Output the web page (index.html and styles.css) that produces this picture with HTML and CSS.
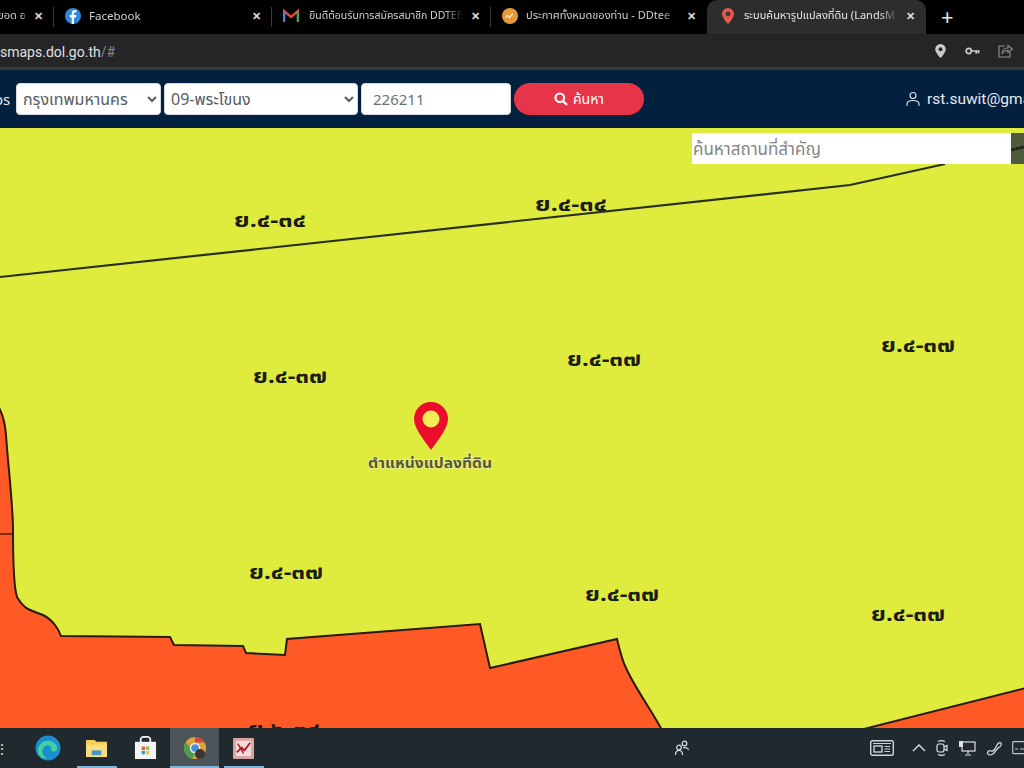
FILE: index.html
```html
<!DOCTYPE html>
<html lang="th">
<head>
  <meta charset="UTF-8" />
  <title>ระบบค้นหารูปแปลงที่ดิน (LandsMaps)</title>
  <link rel="stylesheet" href="styles.css">
</head>
<body>
  <!-- Browser tabs -->
  <div class="tab-bar">
    <div class="tab tab-first">
      <span class="tab-title">ยอด อ</span>
      <span class="tab-close">&#10005;</span>
    </div>
    <div class="tab tab-fb">
      <svg class="tab-icon" viewBox="0 0 16 16"><circle cx="8" cy="8" r="8" fill="#2d88d8"/><path d="M9 16V9.4h2l.4-2.4H9V5.6c0-.8.3-1.2 1.2-1.2h1.2V2.2C11 2.1 10.400 2 9.700 2 7.900 2 6.700 3.100 6.700 5.200V7H4.800v2.400h1.900V16z" fill="#fff"/></svg>
      <span class="tab-title">Facebook</span>
      <span class="tab-close">&#10005;</span>
    </div>
    <div class="tab tab-mail">
      <svg class="tab-icon" viewBox="0 0 16 14"><path d="M1 13V2l7 6 7-6v11" fill="none" stroke="#e0483c" stroke-width="2.400"/><path d="M1 13V3" stroke="#4a86d8" stroke-width="2.400"/><path d="M15 13V3" stroke="#3da35a" stroke-width="2.400"/></svg>
      <span class="tab-title">ยินดีต้อนรับการสมัครสมาชิก DDTEED</span>
      <span class="tab-close">&#10005;</span>
    </div>
    <div class="tab tab-dd">
      <svg class="tab-icon" viewBox="0 0 16 16"><circle cx="8" cy="8" r="8" fill="#e49a3a"/><path d="M4 10c1-3 2-3 3-1s2-3 4-3" fill="none" stroke="#fbe3b8" stroke-width="1.500"/></svg>
      <span class="tab-title">ประกาศทั้งหมดของท่าน - DDtee</span>
      <span class="tab-close">&#10005;</span>
    </div>
    <div class="tab tab-active">
      <svg class="tab-icon tab-pin" viewBox="0 0 12 16"><path d="M6 0a6 6 0 0 0-6 6c0 4 6 10 6 10s6-6 6-10a6 6 0 0 0-6-6z" fill="#e8574c"/><circle cx="6" cy="6" r="2.400" fill="#3a3a3b"/></svg>
      <span class="tab-title">ระบบค้นหารูปแปลงที่ดิน (LandsM</span>
      <span class="tab-close">&#10005;</span>
    </div>
    <span class="tab-new">+</span>
  </div>

  <!-- Address bar -->
  <div class="tool-bar">
    <div class="url">smaps.dol.go.th<span class="url-rest">/#</span></div>
    <div class="tool-icons">
      <svg class="tool-pin" viewBox="0 0 12 16" width="11" height="14"><path d="M6 0a6 6 0 0 0-6 6c0 4 6 10 6 10s6-6 6-10a6 6 0 0 0-6-6z" fill="#c9cacb"/><circle cx="6" cy="6" r="2.200" fill="#232325"/></svg>
      <svg viewBox="0 0 16 8" width="15" height="8"><circle cx="4" cy="4" r="2.800" fill="none" stroke="#c9cacb" stroke-width="1.800"/><path d="M7 4h8.500M12 4v3M14.500 4v2.500" stroke="#c9cacb" stroke-width="1.800"/></svg>
      <svg viewBox="0 0 16 16" width="16" height="16"><path d="M8 3H2v11h11V9" fill="none" stroke="#8f9091" stroke-width="1.100"/><path d="M5 11c0-4 3-6 6-6V2.500L15.500 6 11 9.500V7.500c-3 0-5 1-6 3.500z" fill="none" stroke="#8f9091" stroke-width="1.100"/></svg>
    </div>
  </div>

  <!-- Site header -->
  <header class="site-header">
    <span class="brand-tail">os</span>
    <select class="field field-province"><option>กรุงเทพมหานคร</option></select>
    <select class="field field-district"><option>09-พระโขนง</option></select>
    <input class="field field-parcel" type="text" value="226211">
    <button class="search-btn">
      <svg viewBox="0 0 14 14" width="14" height="14"><circle cx="5.800" cy="5.800" r="4.300" fill="none" stroke="#fff" stroke-width="2.200"/><path d="M9 9l4 4" stroke="#fff" stroke-width="2.400"/></svg>
      ค้นหา
    </button>
    <div class="user">
      <svg viewBox="0 0 16 16" width="16" height="16"><circle cx="8" cy="4.500" r="3" fill="none" stroke="#dfe5ea" stroke-width="1.100"/><path d="M2 15v-2c0-2 2-3.500 6-3.500s6 1.500 6 3.500v2" fill="none" stroke="#dfe5ea" stroke-width="1.100"/></svg>
      <span class="user-name">rst.suwit@gma</span>
    </div>
  </header>

  <!-- Map -->
  <main class="map">
    <svg class="map-canvas" viewBox="0 128 1024 600" width="1024" height="600">
      <rect x="0" y="128" width="1024" height="600" fill="#dfec3e"/>
      <path class="zone" d="M-2 406C3 414 5 422 6 435C8 465 13 505 13 530C13 555 13 585 17 597C20 602 24 607 28 609C34 612 38 613 43 615C49 618 52 621 55 625C58 629 60 633 61 636L170 637L174 645L243 646L246 653L285 655L287 639L480 624L490 668L617 639C620 652 622 660 626 668C635 688 650 708 662 730H-2Z"/>
      <path class="zone" d="M860 730L1026 688V730Z"/>
      <path class="line" d="M0 277L850 185L945 164"/>
      <path class="line thin" d="M0 534H12"/>
      <text class="plot" textLength="72" lengthAdjust="spacingAndGlyphs" x="270" y="227">ย.๔-๓๔</text>
      <text class="plot" textLength="72" lengthAdjust="spacingAndGlyphs" x="571" y="211">ย.๔-๓๔</text>
      <text class="plot" textLength="74" lengthAdjust="spacingAndGlyphs" x="290" y="383">ย.๔-๓๗</text>
      <text class="plot" textLength="74" lengthAdjust="spacingAndGlyphs" x="604" y="366">ย.๔-๓๗</text>
      <text class="plot" textLength="74" lengthAdjust="spacingAndGlyphs" x="918" y="352">ย.๔-๓๗</text>
      <text class="plot" textLength="74" lengthAdjust="spacingAndGlyphs" x="286" y="579">ย.๔-๓๗</text>
      <text class="plot" textLength="74" lengthAdjust="spacingAndGlyphs" x="622" y="601">ย.๔-๓๗</text>
      <text class="plot" textLength="74" lengthAdjust="spacingAndGlyphs" x="908" y="621">ย.๔-๓๗</text>
      <text class="plot" textLength="72" lengthAdjust="spacingAndGlyphs" x="284" y="736">ย.๖-๓๔</text>
      <path d="M431 402a17 17 0 0 0-17 17c0 9 10 21 17 31c7-10 17-22 17-31a17 17 0 0 0-17-17z" fill="#ea0d2c"/>
      <circle cx="431" cy="419" r="8.500" fill="#f3ee58"/>
      <text class="pin-label" textLength="124" lengthAdjust="spacingAndGlyphs" x="430" y="468">ตำแหน่งแปลงที่ดิน</text>
    </svg>
    <input class="place-search" type="text" placeholder="ค้นหาสถานที่สำคัญ">
    <div class="layer-btn"></div>
  </main>

  <!-- Windows taskbar -->
  <footer class="task-bar">
    <span class="task-edge">&#8942;</span>
    <div class="task-apps">
      <div class="app">
        <svg viewBox="0 0 26 26" width="26" height="26"><circle cx="13" cy="13" r="12.500" fill="#1a8fd0"/><path d="M3 16C3 8 10 5 15 6c5 1 8 5 7 9-1 2-5 2-6 0 2-4-3-6-7-3-3 3-2 9 3 11-5 1-9-2-9-7z" fill="#43d19b"/></svg>
      </div>
      <div class="app app-open">
        <svg viewBox="0 0 24 20" width="23" height="19"><path d="M1 1h9l2 2h11v16H1z" fill="#f5cf58"/><rect x="1" y="6" width="22" height="13" fill="#f8dd7e"/><rect x="7" y="12" width="10" height="5" fill="#3f97c6"/></svg>
      </div>
      <div class="app">
        <svg viewBox="0 0 24 25" width="23" height="24"><rect x="1" y="6" width="22" height="18" fill="#f4f4f4"/><path d="M7 7V3a3 3 0 0 1 3-2h4a3 3 0 0 1 3 2v4" fill="none" stroke="#f4f4f4" stroke-width="1.800"/><rect x="8" y="11" width="3.500" height="3.500" fill="#e85b30"/><rect x="12.500" y="11" width="3.500" height="3.500" fill="#8cc63f"/><rect x="8" y="15.500" width="3.500" height="3.500" fill="#2d9cdb"/><rect x="12.500" y="15.500" width="3.500" height="3.500" fill="#f2c230"/></svg>
      </div>
      <div class="app app-active">
        <svg viewBox="0 0 24 24" width="24" height="24"><circle cx="12" cy="12" r="11" fill="#d9a53c"/><path d="M12 1a11 11 0 0 1 9.500 5.500H12z" fill="#d8473b"/><path d="M2.500 6.500A11 11 0 0 0 9 22.600L13 17z" fill="#4f9a52"/><circle cx="12" cy="12" r="4.500" fill="#4a8fd8" stroke="#eee" stroke-width="1.400"/><circle cx="17" cy="18" r="5" fill="#3a3533"/></svg>
      </div>
      <div class="app app-open">
        <svg viewBox="0 0 22 22" width="21" height="21"><rect width="22" height="22" rx="1" fill="#d9a3a0"/><rect x="3" y="3" width="16" height="16" fill="#f1dcdb"/><path d="M4 15l5-5 3 3 6-8" fill="none" stroke="#b01e2e" stroke-width="2"/><path d="M5 6l6 10" stroke="#b01e2e" stroke-width="1.600"/></svg>
      </div>
    </div>
    <svg class="task-people" viewBox="0 0 16 16" width="16" height="16"><circle cx="10.500" cy="3.500" r="2.300" fill="none" stroke="#dcdfe1" stroke-width="1.200"/><circle cx="5" cy="7.500" r="2.300" fill="none" stroke="#dcdfe1" stroke-width="1.200"/><path d="M1.500 15c0-3 1.500-4.500 3.500-4.500S8.500 12 8.500 15M9 8c2-.8 5-.5 5.500 2" fill="none" stroke="#dcdfe1" stroke-width="1.200"/></svg>
    <div class="task-tray">
      <svg class="tray-news" viewBox="0 0 24 16" width="24" height="16"><rect x=".7" y=".7" width="22.600" height="14.600" rx="1.500" fill="none" stroke="#cfd2d4" stroke-width="1.400"/><rect x="4" y="6" width="8" height="6" fill="none" stroke="#cfd2d4" stroke-width="1.400"/><path d="M3 3.500h18M14.500 6.500H20M14.500 9H20M14.500 11.500H20" stroke="#cfd2d4" stroke-width="1.200"/></svg>
      <svg viewBox="0 0 14 8" width="14" height="8"><path d="M1 7l6-6 6 6" fill="none" stroke="#dcdfe1" stroke-width="1.400"/></svg>
      <svg viewBox="0 0 12 18" width="12" height="18"><rect x="1" y="5" width="7" height="8" rx="2" fill="none" stroke="#dcdfe1" stroke-width="1.200"/><path d="M8 8l3-1.500v5L8 10M2 2.500c2-1 5-1 7 0M2 15.500c2 1 5 1 7 0" fill="none" stroke="#dcdfe1" stroke-width="1.200"/></svg>
      <svg viewBox="0 0 18 16" width="18" height="16"><rect x="4" y="2" width="13" height="9" fill="none" stroke="#dcdfe1" stroke-width="1.200"/><rect x="1" y="1" width="4" height="6" fill="#dcdfe1"/><path d="M10 11v3M7 15h6" stroke="#dcdfe1" stroke-width="1.200"/></svg>
      <svg viewBox="0 0 16 16" width="16" height="16"><path d="M2 14c-1.500-2 1-4 3-3 3 1 4-2 6-6 1-2 3-3 4-2 1 2-1 4-3 5-2 2-3 4-4 5s-4 3-6 1z" fill="none" stroke="#dcdfe1" stroke-width="1.200"/></svg>
      <svg viewBox="0 0 16 14" width="16" height="14"><rect x=".7" y=".7" width="16" height="12" rx="1" fill="none" stroke="#c0c3c5" stroke-width="1.200"/><path d="M3 8h3M8 8h4" stroke="#c0c3c5" stroke-width="1.200"/></svg>
    </div>
  </footer>
</body>
</html>
```

FILE: styles.css
```css
* {
  box-sizing: border-box;
}

body {
  margin: 0;
  width: 1024px;
  height: 768px;
  overflow: hidden;
  display: flex;
  flex-direction: column;
  background-color: #000;
  font-family: 'Noto Sans', 'Noto Sans Thai', 'Liberation Sans', sans-serif;
}

/* Tabs */
.tab-bar {
  height: 34px;
  display: flex;
  align-items: center;
  background-color: #000;
  color: #cfd0d1;
  font-size: 11.5px;
}

.tab {
  height: 34px;
  display: flex;
  align-items: center;
  flex: none;
  padding: 0 11px 3px 11px;
  position: relative;
}

.tab-first { width: 54px; padding-left: 0; justify-content: space-between; }
.tab-fb { width: 218px; }
.tab-mail { width: 219px; }
.tab-dd { width: 216px; }

/* separator between the idle tabs */
.tab-first::after,
.tab-fb::after,
.tab-mail::after {
  content: "";
  position: absolute;
  right: 0;
  top: 7px;
  height: 20px;
  width: 1px;
  background-color: #3a3a3b;
}

.tab-active {
  width: 219px;
  padding-left: 15px;
  background-color: #2d2d2e;
  border-radius: 10px 10px 0 0;
  color: #e4e4e4;
}

.tab-icon {
  width: 16px;
  height: 16px;
  flex: none;
  margin-right: 8px;
}

.tab-mail .tab-icon { margin-right: 10px; }

.tab-pin {
  width: 12px;
  margin-right: 10px;
}

.tab-title {
  flex: 1;
  min-width: 0;
  overflow: hidden;
  white-space: nowrap;
  font-size: 11px;
  -webkit-mask-image: linear-gradient(to right, #000 88%, transparent);
  mask-image: linear-gradient(to right, #000 88%, transparent);
}

.tab-fb .tab-title { font-size: 11.5px; }
.tab-mail .tab-title { font-size: 10.5px; }

.tab-first .tab-title { direction: rtl; }

.tab-close {
  flex: none;
  margin-left: 8px;
  font-size: 11px;
  font-weight: 700;
  color: #dcdcdc;
}

.tab-new {
  margin-left: 15px;
  margin-top: -2px;
  color: #e8e8e8;
  font-size: 22px;
  line-height: 1;
}

/* Address bar */
.tool-bar {
  height: 36px;
  display: flex;
  align-items: center;
  justify-content: space-between;
  padding: 0 11px 0 0;
  background-color: #252527;
  border-bottom: 3px solid #3a3b3d;
}

.url {
  font-family: 'Roboto', 'Noto Sans', sans-serif;
  font-size: 14px;
  color: #dfe0e1;
  margin-top: 2px;
}

.url-rest {
  color: #85878a;
}

.tool-icons {
  display: flex;
  align-items: center;
  gap: 17px;
}

.tool-pin {
  margin-right: 2px;
}

/* Site header */
.site-header {
  height: 58px;
  display: flex;
  align-items: center;
  background-color: #03203f;
  color: #e6eaee;
}

.brand-tail {
  width: 16px;
  flex: none;
  font-size: 15px;
  margin-left: -6px;
  margin-right: 6px;
}

.field {
  height: 32px;
  border: 1px solid #d5dbe0;
  border-radius: 4px;
  background-color: #fff;
  color: #555b60;
  font-family: inherit;
  font-size: 16px;
  padding: 0 2px;
}

.field-province { width: 145px; }
.field-district { width: 194px; margin-left: 3px; }
.field-parcel { width: 150px; margin-left: 3px; padding-left: 11px; font-size: 15px; color: #6c7277; }

.search-btn {
  width: 130px;
  height: 32px;
  margin-left: 3px;
  display: flex;
  align-items: center;
  justify-content: center;
  gap: 5px;
  border: none;
  border-radius: 16px;
  background-color: #e63549;
  color: #fff;
  font-family: inherit;
  font-size: 14px;
}

.user {
  display: flex;
  align-items: center;
  gap: 6px;
  margin-left: auto;
  width: 119px;
  flex: none;
  white-space: nowrap;
  font-family: 'Roboto', 'Noto Sans', sans-serif;
  font-size: 15.5px;
}

.user svg {
  flex: none;
}

/* Map */
.map {
  position: relative;
  height: 600px;
  overflow: hidden;
}

.map-canvas {
  display: block;
}

.zone {
  fill: #ff5a26;
  stroke: #2a1a10;
  stroke-width: 2;
}

.line {
  fill: none;
  stroke: #26301c;
  stroke-width: 2.2;
}

.line.thin {
  stroke: #5b1c10;
  stroke-width: 1.5;
}

.plot {
  fill: #1c1c16;
  font-size: 19px;
  font-weight: 700;
  text-anchor: middle;
}

.pin-label {
  fill: #55583a;
  stroke: rgba(238, 240, 150, 0.7);
  stroke-width: 2px;
  paint-order: stroke;
  font-size: 14px;
  font-weight: 700;
  text-anchor: middle;
}

.place-search {
  position: absolute;
  top: 5px;
  left: 692px;
  width: 319px;
  height: 31px;
  border: none;
  padding: 0 1px;
  background-color: #fff;
  font-family: inherit;
  font-size: 17px;
}

.place-search::placeholder {
  color: #858585;
}

.layer-btn {
  position: absolute;
  top: 5px;
  left: 1011px;
  width: 13px;
  height: 31px;
  background: linear-gradient(165deg, #4e5b3c 46%, #1f2612 46%, #1f2612 54%, #4e5b3c 54%);
}

/* Taskbar */
.task-bar {
  height: 40px;
  display: flex;
  align-items: center;
  background-color: #20292e;
  color: #dcdfe1;
}

.task-edge {
  width: 23px;
  flex: none;
  font-size: 14px;
  text-indent: -5px;
}

.task-apps {
  display: flex;
  height: 40px;
}

.app {
  width: 49px;
  height: 40px;
  display: flex;
  align-items: center;
  justify-content: center;
}

.app-open {
  background: linear-gradient(#7fb6dc, #7fb6dc) bottom center / 40px 2px no-repeat;
}

.app-active {
  background: linear-gradient(#7fb6dc, #7fb6dc) bottom center / 100% 2px no-repeat, #4a5459;
}

.task-people {
  flex: none;
  margin-left: 406px;
}

.task-tray {
  display: flex;
  align-items: center;
  gap: 10px;
  margin-left: 180px;
  flex: none;
}

.tray-news {
  margin-right: 8px;
}
```
